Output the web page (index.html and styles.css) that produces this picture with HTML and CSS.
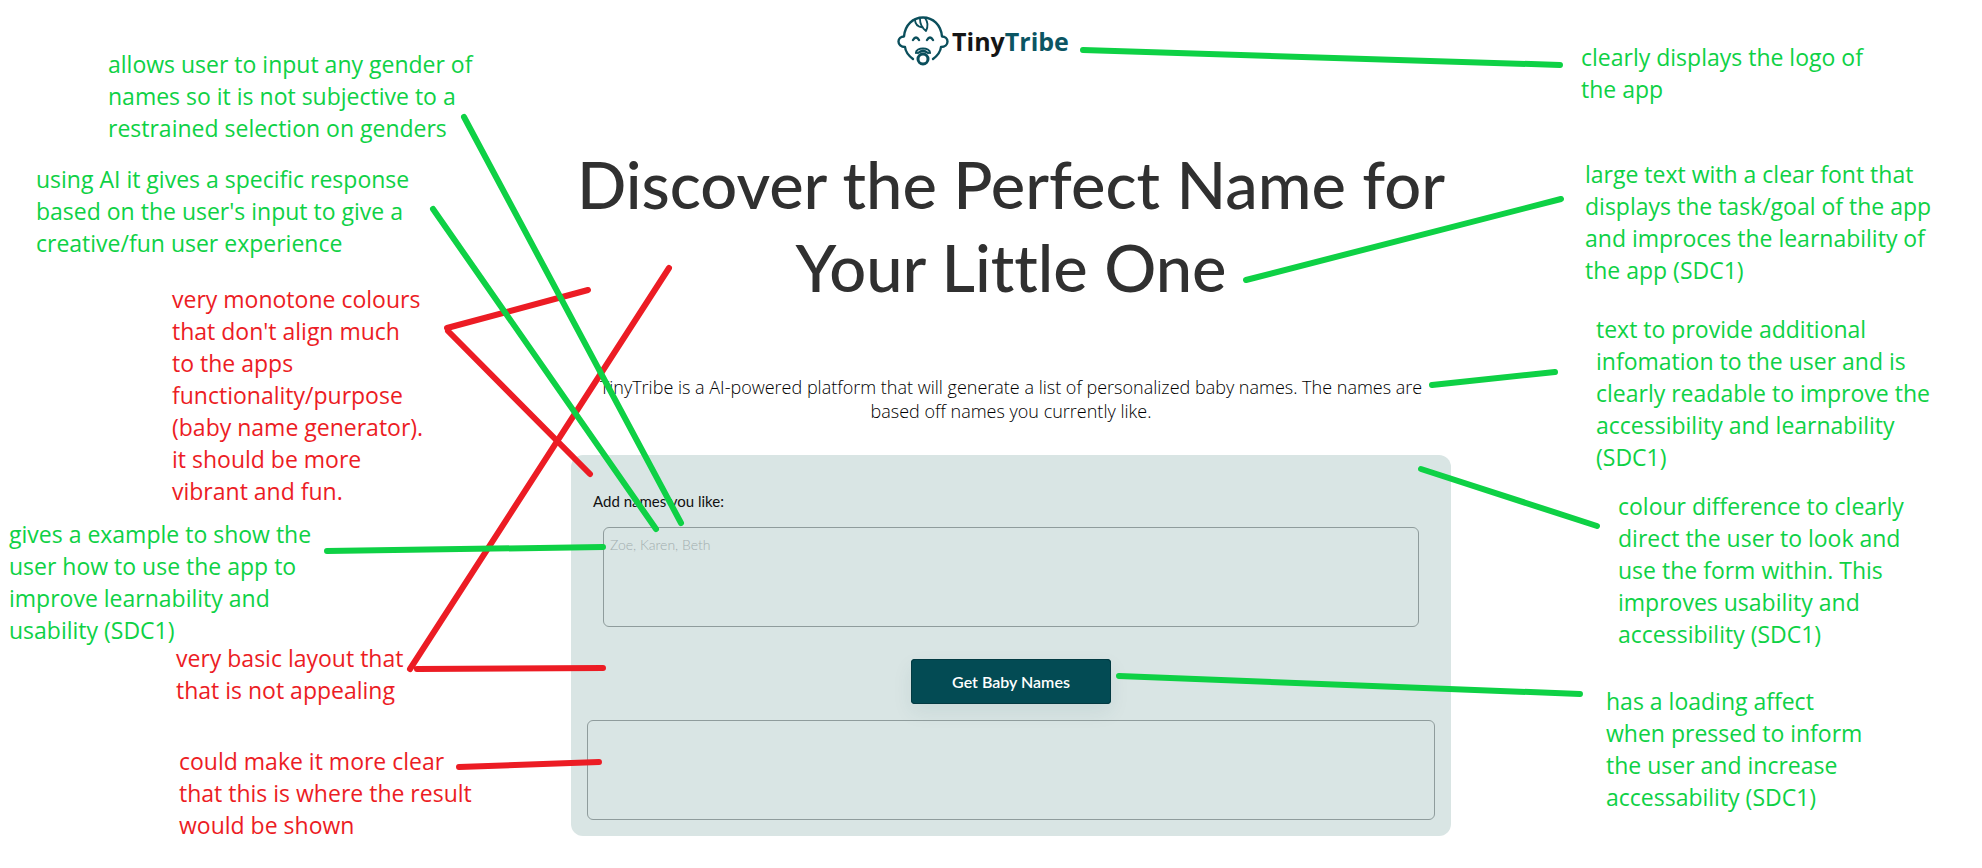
FILE: index.html
```html
<!DOCTYPE html>
<html lang="en">
<head>
<meta charset="utf-8">
<meta name="viewport" content="width=device-width, initial-scale=1">
<title>TinyTribe</title>
<link rel="stylesheet" href="styles.css">
</head>
<body>
<div class="page">
  <header class="brand">
    <svg class="brand-icon" viewBox="0 0 52 50" aria-hidden="true" fill="none" stroke="#0b4f5c" stroke-width="2.4" stroke-linecap="round" stroke-linejoin="round">
      <path d="M16 43C12 40 8.500 36 8 31C4 31 1.500 28.500 1.500 25.500C1.500 22.500 4 20.500 7 20.500C8 9 16 1.500 26 1.500C36 1.500 44 9 45 20.500C48 20.500 50.500 22.500 50.500 25.500C50.500 28.500 48 31 44 31C43.500 36 40 40 36 43"/>
      <path d="M18 3.500C18 8 21 11 26 11.500M23 3C23 8 25 12 29 15C31 11 31 6 28 2" stroke-width="1.800"/>
      <path d="M16 24q3-5 6 0M30 24q3-5 6 0"/>
      <path d="M19 37C19 31 33 31 33 37M21 37q5-4 10 0" stroke-width="2.200"/>
      <circle cx="26" cy="43" r="5" stroke-width="3"/>
    </svg>
    <span class="brand-name">Tiny<span class="brand-accent">Tribe</span></span>
  </header>

  <main>
    <h1 class="title">Discover the Perfect Name for Your Little One</h1>
    <p class="intro">TinyTribe is a AI-powered platform that will generate a list of personalized baby names. The names are based off names you currently like.</p>
    <form class="card">
      <label class="label" for="names">Add names you like:</label>
      <textarea class="names" id="names" placeholder="Zoe, Karen, Beth"></textarea>
      <button class="submit" type="button">Get Baby Names</button>
      <output class="result" for="names"></output>
    </form>
  </main>

  <div class="notes">
    <svg class="lines" width="10" height="10" aria-hidden="true">
      <g class="line-bad">
        <path d="M447 328L588 290M448 331L590 474"/>
        <path d="M669 268L410 669M417 669L603 668"/>
        <path d="M459 767L599 762"/>
      </g>
      <g class="line-good">
        <path d="M464 117L681 523"/>
        <path d="M433 209L656 529"/>
        <path d="M327 551L603 547"/>
        <path d="M1083 50L1560 65"/>
        <path d="M1246 280L1561 199"/>
        <path d="M1432 385L1555 372"/>
        <path d="M1421 469L1597 526"/>
        <path d="M1119 676L1580 694"/>
      </g>
    </svg>
    <p class="note good note-gender">allows user to input any gender of<br>names so it is not subjective to a<br>restrained selection on genders</p>
    <p class="note good note-ai">using AI it gives a specific response<br>based on the user's input to give a<br>creative/fun user experience</p>
    <p class="note bad note-colours">very monotone colours<br>that don't align much<br>to the apps<br>functionality/purpose<br>(baby name generator).<br>it should be more<br>vibrant and fun.</p>
    <p class="note good note-example">gives a example to show the<br>user how to use the app to<br>improve learnability and<br>usability (SDC1)</p>
    <p class="note bad note-layout">very basic layout that<br>that is not appealing</p>
    <p class="note bad note-result">could make it more clear<br>that this is where the result<br>would be shown</p>
    <p class="note good note-logo">clearly displays the logo of<br>the app</p>
    <p class="note good note-title">large text with a clear font that<br>displays the task/goal of the app<br>and improces the learnability of<br>the app (SDC1)</p>
    <p class="note good note-intro">text to provide additional<br>infomation to the user and is<br>clearly readable to improve the<br>accessibility and learnability<br>(SDC1)</p>
    <p class="note good note-card">colour difference to clearly<br>direct the user to look and<br>use the form within. This<br>improves usability and<br>accessibility (SDC1)</p>
    <p class="note good note-loading">has a loading affect<br>when pressed to inform<br>the user and increase<br>accessability (SDC1)</p>
  </div>
</div>
</body>
</html>
```
FILE: styles.css
```css
* { box-sizing: border-box; }

body {
  margin: 0;
  padding-left: 40px;
  background: #fff;
  color: #111;
  font-family: Lato, "Open Sans", sans-serif;
  overflow-x: hidden;
}

.page {
  position: relative;
  max-width: 880px;
  margin: 0 auto;
}

.brand {
  display: flex;
  align-items: center;
  justify-content: center;
  gap: 3px;
  padding: 16px 56px 0 0;
}
.brand-icon { width: 52px; height: 50px; }
.brand-name {
  font-family: "Open Sans", sans-serif;
  font-size: 25px;
  font-weight: 700;
  line-height: 32px;
  color: #151515;
}
.brand-accent { color: #0b5563; }

.title {
  margin: 77px 0 0;
  font-size: 65px;
  line-height: 83px;
  font-weight: 500;
  font-variant-ligatures: none;
  text-align: center;
  color: #303030;
}

.intro {
  margin: 66px 0 0;
  padding: 0 16px;
  color: #000;
  font-family: "Open Sans", sans-serif;
  font-size: 18px;
  font-weight: 300;
  line-height: 24px;
  text-align: center;
}

.card {
  display: flex;
  flex-direction: column;
  margin-top: 32px;
  padding: 32px 16px 16px;
  border-radius: 12px;
  background: #d9e5e4;
}
.label {
  padding: 4px 6px;
  font-size: 15px;
  line-height: 20px;
}
.names, .result {
  height: 100px;
  border: 1px solid #8f9c9c;
  border-radius: 6px;
  background: transparent;
}
.names {
  margin: 12px 16px 0;
  padding: 7px 6px;
  font: 300 14px/20px Lato, sans-serif;
  resize: none;
}
.names::placeholder { color: #a2aeaf; opacity: 1; }
.submit {
  align-self: center;
  width: 200px;
  margin: 32px 0 16px;
  padding: 12px;
  border: 0;
  border-radius: 4px;
  background: #034b54;
  box-shadow: inset 0 0 0 1px #033a42, 0 8px 20px rgba(3, 75, 84, 0.08);
  color: #fff;
  font: 600 16px/21px Lato, sans-serif;
}
.result { display: block; }

/* Review notes laid freely over the page, measured from the left note edge. */
.notes {
  position: absolute;
  top: 0;
  left: -571px;
  width: 0;
}
.lines {
  position: absolute;
  top: 0;
  left: 0;
  overflow: visible;
  fill: none;
  stroke-width: 6;
  stroke-linecap: round;
}
.line-good { stroke: #0ed145; }
.line-bad { stroke: #ec1c24; }

.note {
  position: absolute;
  margin: 0;
  font: 23px/32px "Open Sans", sans-serif;
  white-space: nowrap;
}
.good { color: #0ed145; }
.bad { color: #ec1c24; }
.note-gender { left: 108px; top: 48px; }
.note-ai { left: 36px; top: 163px; }
.note-colours { left: 172px; top: 283px; }
.note-example { left: 9px; top: 518px; }
.note-layout { left: 176px; top: 642px; }
.note-result { left: 179px; top: 745px; }
.note-logo { left: 1581px; top: 41px; }
.note-title { left: 1585px; top: 158px; }
.note-intro { left: 1596px; top: 313px; }
.note-card { left: 1618px; top: 490px; }
.note-loading { left: 1606px; top: 685px; }
```
